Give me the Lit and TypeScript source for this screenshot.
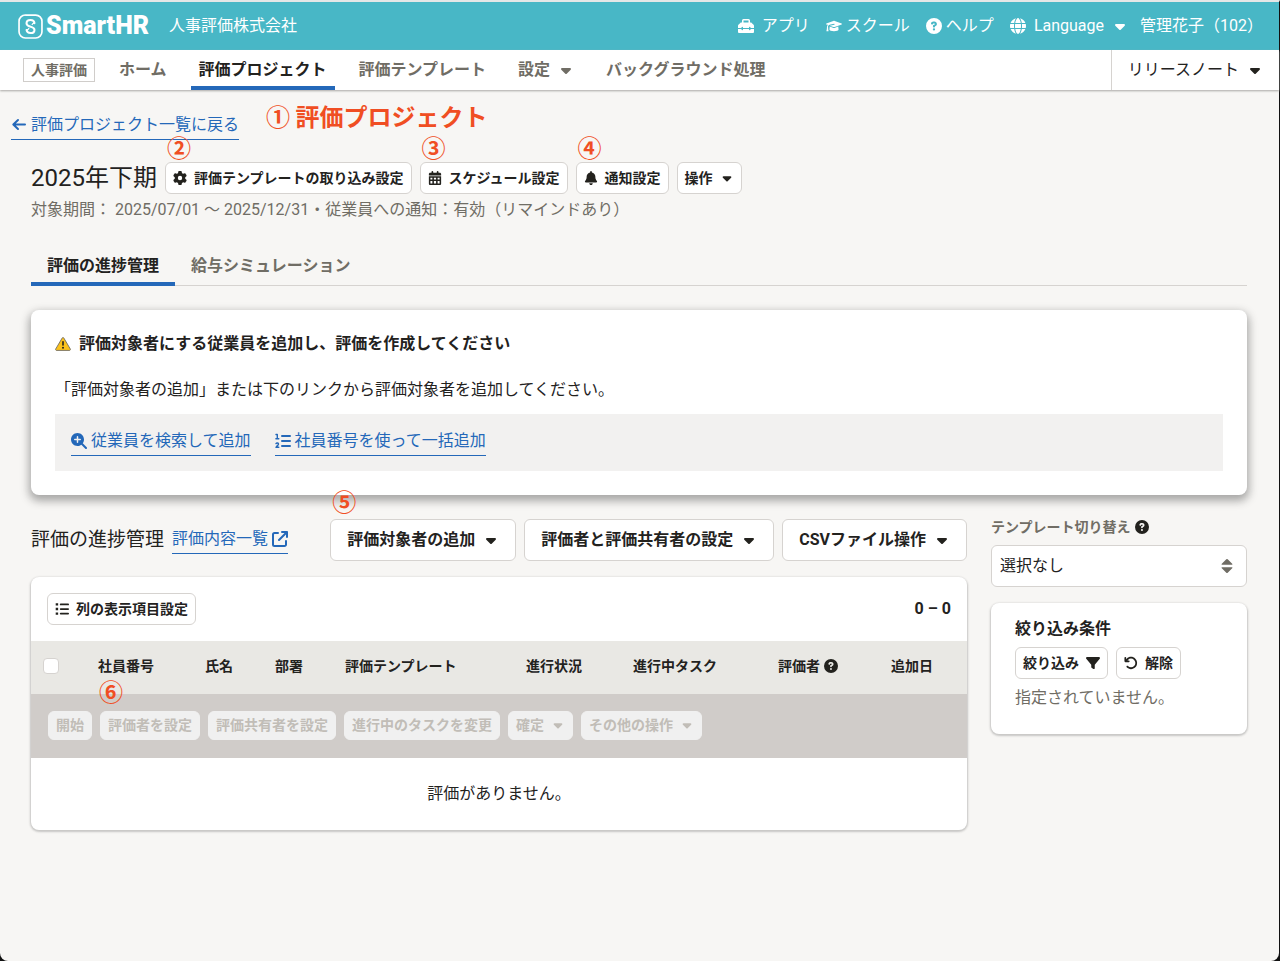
import { LitElement, html, css, svg, nothing, TemplateResult } from "lit";
import { customElement, property } from "lit/decorators.js";

type Glyph = { box: string; body: TemplateResult };

const path = (box: string, d: string): Glyph => ({
  box,
  body: svg`<path fill="currentColor" fill-rule="evenodd" d=${d} />`,
});

const GLYPHS: Record<string, Glyph> = {
  caret: path(
    "-96 0 512 512",
    "M137.400 374.600c12.500 12.500 32.800 12.500 45.300 0l128-128c9.200-9.200 11.900-22.900 6.900-34.900s-16.600-19.800-29.600-19.800L32 192c-12.900 0-24.600 7.800-29.600 19.800s-2.200 25.700 6.900 34.900l128 128z"
  ),
  sort: path(
    "0 0 16 16",
    "M3.200 6.800h9.600c.6 0 .8-.6.4-1L8.700 1.300a1 1 0 0 0-1.400 0L2.800 5.800c-.4.4-.2 1 .4 1zM3.200 9.200h9.600c.6 0 .8.6.4 1l-4.500 4.500a1 1 0 0 1-1.400 0l-4.500-4.500c-.4-.4-.2-1 .4-1z"
  ),
  gear: path(
    "0 0 512 512",
    "M495.9 166.600c3.200 8.700 .5 18.400-6.400 24.600l-43.300 39.400c1.100 8.300 1.700 16.800 1.700 25.400s-.6 17.100-1.700 25.400l43.300 39.400c6.900 6.200 9.600 15.900 6.400 24.600c-4.400 11.900-9.700 23.300-15.800 34.300l-4.700 8.100c-6.600 11-14 21.400-22.100 31.200c-5.900 7.200-15.700 9.600-24.500 6.800l-55.700-17.700c-13.400 10.300-28.200 18.900-44 25.400l-12.500 57.100c-2 9.100-9 16.300-18.200 17.800c-13.800 2.300-28 3.500-42.500 3.500s-28.700-1.200-42.500-3.500c-9.200-1.500-16.200-8.700-18.200-17.800l-12.500-57.100c-15.800-6.500-30.600-15.100-44-25.400L83.100 425.900c-8.800 2.800-18.600 .3-24.500-6.800c-8.100-9.800-15.500-20.200-22.100-31.200l-4.700-8.100c-6.100-11-11.400-22.400-15.800-34.300c-3.200-8.700-.5-18.400 6.400-24.600l43.300-39.400C64.600 273.100 64 264.600 64 256s.6-17.100 1.700-25.400L22.400 191.200c-6.900-6.200-9.600-15.900-6.400-24.600c4.400-11.900 9.700-23.300 15.800-34.300l4.700-8.100c6.600-11 14-21.400 22.100-31.200c5.900-7.200 15.700-9.600 24.500-6.800l55.700 17.700c13.400-10.300 28.200-18.900 44-25.400l12.500-57.100c2-9.100 9-16.300 18.200-17.800C227.300 1.200 241.500 0 256 0s28.700 1.200 42.500 3.500c9.200 1.500 16.200 8.700 18.200 17.800l12.500 57.100c15.800 6.500 30.600 15.100 44 25.400l55.700-17.700c8.800-2.800 18.600-.3 24.500 6.800c8.100 9.800 15.500 20.200 22.100 31.200l4.700 8.100c6.100 11 11.400 22.400 15.800 34.300zM256 336a80 80 0 1 0 0-160 80 80 0 1 0 0 160z"
  ),
  bell: path(
    "-32 0 512 512",
    "M224 0c-17.700 0-32 14.300-32 32V51.200C119 66 64 130.600 64 208v18.800c0 47-17.300 92.400-48.500 127.600l-7.400 8.300c-8.400 9.400-10.400 22.900-5.300 34.400S19.400 416 32 416H416c12.600 0 24-7.400 29.200-18.900s3.100-25-5.300-34.400l-7.400-8.300C401.300 319.200 384 273.900 384 226.800V208c0-77.400-55-142-128-156.800V32c0-17.700-14.300-32-32-32zm45.300 493.300c12-12 18.700-28.300 18.700-45.300H160c0 17 6.700 33.300 18.700 45.300s28.300 18.700 45.300 18.700s33.300-6.700 45.300-18.700z"
  ),
  calendar: path(
    "-32 0 512 512",
    "M128 0c17.700 0 32 14.300 32 32v32h128V32c0-17.700 14.300-32 32-32s32 14.300 32 32v32h48c26.500 0 48 21.500 48 48v48H0v-48c0-26.500 21.500-48 48-48h48V32c0-17.700 14.300-32 32-32zM0 192h448v272c0 26.500-21.500 48-48 48H48c-26.500 0-48-21.500-48-48zM56 248v60h72v-60zM184 248v60h80v-60zM320 248v60h72v-60zM56 364v92h72v-92zM184 364v92h80v-92zM320 364v92h72v-92z"
  ),
  help: path(
    "0 0 512 512",
    "M256 512A256 256 0 1 0 256 0a256 256 0 1 0 0 512zM160 170c10-34 38-58 78-58h30c44 0 80 34 80 78c0 30-16 54-42 68l-18 10c0 20-14 34-33 34c-20 0-33-14-33-34v-14c0-12 6-22 17-28l38-22c5-3 8-8 8-14c0-9-7-15-16-15h-30c-9 0-14 5-17 14c-6 17-22 26-40 19c-17-6-26-22-22-38zM218 364a37 37 0 1 1 74 0 37 37 0 1 1-74 0z"
  ),
  globe: path(
    "0 0 512 512",
    "M352 256c0 22.200-1.200 43.600-3.300 64H163.300c-2.200-20.400-3.300-41.800-3.300-64s1.200-43.600 3.300-64H348.700c2.200 20.400 3.300 41.800 3.300 64zm28.800-64H503.900c5.300 20.500 8.100 41.900 8.100 64s-2.800 43.500-8.100 64H380.800c2.100-20.600 3.200-42 3.200-64s-1.100-43.400-3.200-64zm112.600-32H376.700c-10-63.900-29.800-117.400-55.300-151.600c78.300 20.700 142 77.500 171.900 151.600zm-149.100 0H167.700c6.100-36.400 15.500-68.600 27-94.700c10.500-23.600 22.200-40.700 33.500-51.500C239.400 3.200 248.700 0 256 0s16.600 3.200 27.800 13.800c11.300 10.800 23 27.900 33.500 51.500c11.600 26 20.900 58.200 27 94.700zm-209 0H18.600C48.600 85.900 112.200 29.100 190.600 8.400C165.100 42.600 145.300 96.100 135.300 160zM8.100 192H131.200c-2.100 20.600-3.200 42-3.200 64s1.100 43.400 3.200 64H8.100C2.800 299.500 0 278.100 0 256s2.800-43.500 8.100-64zM194.700 446.600c-11.600-26-20.900-58.200-27-94.600H344.300c-6.100 36.400-15.500 68.600-27 94.600c-10.500 23.600-22.200 40.700-33.500 51.500C272.600 508.800 263.300 512 256 512s-16.600-3.200-27.800-13.800c-11.300-10.800-23-27.900-33.500-51.500zM135.300 352c10 63.900 29.800 117.400 55.300 151.600C112.200 482.900 48.600 426.100 18.600 352H135.300zm358.100 0c-30 74.100-93.600 130.900-171.900 151.600c25.500-34.200 45.200-87.700 55.300-151.600H493.400z"
  ),
  searchPlus: path(
    "0 0 512 512",
    "M416 208c0 45.900-14.900 88.300-40 122.700L502.600 457.400c12.500 12.500 12.500 32.800 0 45.300s-32.800 12.500-45.300 0L330.700 376c-34.400 25.200-76.800 40-122.700 40C93.100 416 0 322.900 0 208S93.100 0 208 0S416 93.100 416 208zM184 296c0 13.300 10.700 24 24 24s24-10.700 24-24V232h64c13.300 0 24-10.700 24-24s-10.700-24-24-24H232V120c0-13.300-10.700-24-24-24s-24 10.700-24 24v64H120c-13.300 0-24 10.700-24 24s10.700 24 24 24h64v64z"
  ),
  filter: path(
    "0 0 512 512",
    "M3.900 54.900C10.500 40.900 24.500 32 40 32H472c15.500 0 29.500 8.900 36.100 22.900s4.600 30.500-5.200 42.500L320 320.900V448c0 12.100-6.800 23.200-17.700 28.600s-23.800 4.300-33.500-3l-64-48c-8.100-6-12.800-15.500-12.800-25.600V320.900L9 97.300C-.7 85.400-2.800 68.800 3.900 54.900z"
  ),
  reset: path(
    "0 0 512 512",
    "M125.700 160H176c17.700 0 32 14.300 32 32s-14.300 32-32 32H48c-17.700 0-32-14.300-32-32V64c0-17.700 14.300-32 32-32s32 14.300 32 32v51.200L97.600 97.600c87.500-87.500 229.300-87.500 316.800 0s87.500 229.300 0 316.800s-229.300 87.500-316.800 0c-12.500-12.500-12.500-32.800 0-45.300s32.800-12.500 45.300 0c62.500 62.500 163.800 62.500 226.300 0s62.500-163.800 0-226.300s-163.800-62.500-226.300 0L125.700 160z"
  ),
  toolbox: path(
    "0 0 16 16",
    "M5.500 1h5A1.500 1.500 0 0 1 12 2.500V4.500h.7c.4 0 .8.200 1 .4l1.900 1.900c.2.200.4.600.4 1V10h-3.500v-.5a.5.500 0 0 0-1.500 0v.5H5v-.5a.5.500 0 0 0-1.500 0v.5H0V7.800c0-.4.100-.8.400-1l1.900-1.900c.2-.2.600-.4 1-.4H4V2.500A1.500 1.500 0 0 1 5.500 1zM5.500 2.500v2h5v-2zM0 11h3.500v.5a.5.500 0 0 0 1.500 0V11h6v.5a.5.500 0 0 0 1.500 0V11H16v3a1 1 0 0 1-1 1H1a1 1 0 0 1-1-1z"
  ),
  school: {
    box: "0 0 20 16",
    body: svg`<path fill="currentColor" d="M10 1.500c.3 0 .6.1.9.2l8.600 3.100c.6.200.6 1 0 1.200l-8.600 3.100c-.6.200-1.200.2-1.800 0L4.800 7.600l5.500-1.200c.8-.2.600-1.300-.2-1.100L4.500 6.500c-1 .3-1.700 1-2 2v1.300c.5.300.5 1 .1 1.300l.6 3c0 .3-.1.500-.4.500H.9c-.3 0-.4-.2-.4-.5l.7-3c-.4-.3-.4-1 .1-1.300V8.600c.2-1 .6-1.700 1.200-2.200L.5 6c-.6-.2-.6-1 0-1.200l8.600-3.100c.3-.1.600-.2.900-.2z"/><path fill="currentColor" d="M4.700 8.700l4 1.500c.9.300 1.700.3 2.600 0l4-1.500.4 3.700c0 1.200-2.500 2.100-5.700 2.100s-5.700-.9-5.700-2.100z"/>`,
  },
  back: {
    box: "0 0 16 16",
    body: svg`<path fill="none" stroke="currentColor" stroke-width="2" stroke-linecap="round" stroke-linejoin="round" d="M14 7.500H2.500M7 3L2.300 7.500l4.700 4.500"/>`,
  },
  list: {
    box: "0 0 16 16",
    body: svg`<path fill="none" stroke="currentColor" stroke-width="2" stroke-linecap="round" d="M6.500 2.800h8.500M6.500 8h8.500M6.500 13.200h8.500"/><path fill="currentColor" d="M.8 1.300h2.800v2.800H.8zM.8 6.600h2.800v2.800H.8zM.8 11.900h2.800v2.800H.8z"/>`,
  },
  listNumbers: {
    box: "0 0 16 16",
    body: svg`<path fill="none" stroke="currentColor" stroke-width="2" stroke-linecap="round" d="M7 3h8M7 8h8M7 13h8"/><path fill="none" stroke="currentColor" stroke-width="1.400" stroke-linecap="round" stroke-linejoin="round" d="M1 1.500h1.300v4.300M.9 5.800h2.900M1 10.600c.6-1 2.500-.8 2.500.5 0 1-1.500 1.600-2.500 3.200h2.800"/>`,
  },
  external: {
    box: "0 0 16 16",
    body: svg`<path fill="none" stroke="currentColor" stroke-width="2" stroke-linecap="round" stroke-linejoin="round" d="M6 2H2.500A1.500 1.500 0 0 0 1 3.500v10A1.500 1.500 0 0 0 2.500 15h10a1.500 1.500 0 0 0 1.500-1.500V10M10 1h5v5M15 1L7 9"/>`,
  },
  warning: {
    box: "0 0 16 16",
    body: svg`<path fill="#fcc21b" stroke="#706d65" stroke-width=".9" stroke-linejoin="round" d="M8 1.500a.9.900 0 0 1 .8.500l6.500 11a.9.900 0 0 1-.8 1.400h-13a.9.900 0 0 1-.8-1.400L7.200 2A.9.900 0 0 1 8 1.500z"/><path fill="none" stroke="#23221e" stroke-width="1.600" stroke-linecap="round" d="M8 5.800v3.200"/><circle cx="8" cy="11.700" r="1" fill="#23221e"/>`,
  },
  logo: {
    box: "0 0 24 24",
    body: svg`<rect x="1" y="1" width="22" height="22" rx="6" fill="none" stroke="currentColor" stroke-width="1.600"/><path fill="none" stroke="currentColor" stroke-width="2" stroke-linecap="round" stroke-linejoin="round" d="M15.800 8.800C15.600 7 14 5.700 12 5.700c-2.200 0-3.800 1.300-3.800 3.100 0 1.600 1 2.300 2.600 2.900l2.400.9c1.600.6 2.600 1.200 2.600 2.700 0 1.800-1.600 3-3.800 3-2 0-3.500-1.200-3.800-3"/><path fill="none" stroke="currentColor" stroke-width="1.200" stroke-linecap="round" d="M8.400 15.200c1.300 0 1.700-.6 2-1.300M15.600 8.800c-1.300 0-1.700.6-2 1.300"/>`,
  },
};

@customElement("ui-icon")
class UiIcon extends LitElement {
  @property() name = "caret";

  static styles = css`
    :host {
      display: inline-flex;
      flex: none;
      width: 16px;
      height: 16px;
    }
    svg {
      display: block;
      width: 100%;
      height: 100%;
    }
  `;

  render() {
    const glyph = GLYPHS[this.name];
    return html`<svg viewBox=${glyph.box} aria-hidden="true">${glyph.body}</svg>`;
  }
}

const BULK_ACTIONS = [
  { label: "開始" },
  { label: "評価者を設定" },
  { label: "評価共有者を設定" },
  { label: "進行中のタスクを変更" },
  { label: "確定", menu: true },
  { label: "その他の操作", menu: true },
];

const COLUMNS = [
  { label: "社員番号", cls: "c-num" },
  { label: "氏名", cls: "c-name" },
  { label: "部署", cls: "c-dept" },
  { label: "評価テンプレート", cls: "c-template" },
  { label: "進行状況", cls: "c-status" },
  { label: "進行中タスク", cls: "c-task" },
  { label: "評価者", cls: "c-reviewer", help: true },
  { label: "追加日", cls: "c-added" },
];

@customElement("app-root")
class AppRoot extends LitElement {
  static styles = css`
    :host {
      display: flex;
      box-sizing: border-box;
      min-height: 100vh;
      border-top: 2px solid #e4e7e7;
      border-right: 1px solid #111;
      background: #111;
      color: #23221e;
      font-family: "Roboto", "Noto Sans CJK JP", sans-serif;
      font-size: 16px;
      line-height: 24px;
    }
    * {
      box-sizing: border-box;
    }
    h1,
    h2,
    p {
      margin: 0;
      font-weight: 400;
    }
    a {
      color: inherit;
      text-decoration: none;
    }
    button,
    select {
      margin: 0;
      font: inherit;
      color: inherit;
    }

    .window {
      flex: 1;
      min-width: 0;
      border-radius: 0 0 8px 8px;
      background: #f7f6f4;
    }
    .topbar {
      display: flex;
      align-items: center;
      height: 48px;
      padding: 0 16px 0 18px;
      background: #48b7c6;
      color: #fff;
    }
    .brand {
      display: flex;
      align-items: center;
      gap: 3px;
      font-size: 25px;
      font-weight: 900;
    }
    .brand ui-icon {
      width: 25px;
      height: 25px;
    }
    .company {
      margin-left: 20px;
    }
    .tools {
      display: flex;
      align-items: center;
      gap: 16px;
      margin-left: auto;
    }
    .tool,
    .plain {
      display: flex;
      align-items: center;
      gap: 8px;
      padding: 0;
      border: 0;
      background: none;
    }
    .tool.tight {
      gap: 4px;
    }
    .who {
      margin-left: -4px;
    }

    .nav {
      position: relative;
      display: flex;
      align-items: stretch;
      gap: 16px;
      height: 40px;
      padding-left: 23px;
      background: #fff;
      box-shadow: 0 1px 2px #a9a7a4;
      color: #706d65;
      font-weight: 700;
    }
    .badge {
      align-self: center;
      height: 24px;
      padding: 0 7px;
      border: 1px solid #d0cdca;
      font-size: 14px;
      line-height: 22px;
    }
    .nav-item {
      display: flex;
      align-items: center;
      gap: 8px;
      padding: 0 8px;
      border: 0;
      background: none;
    }
    .nav-item.active {
      color: #23221e;
      box-shadow: inset 0 -4px #2468b9;
    }
    .release {
      margin-left: auto;
      padding: 0 16px;
      border: 0;
      border-left: 1px solid #d6d3d0;
      color: #23221e;
      font-weight: 400;
    }

    .page {
      padding: 24px 32px 32px 31px;
    }
    .crumbs {
      position: relative;
      display: flex;
      margin-left: -20px;
    }
    .link {
      display: inline-flex;
      align-items: center;
      gap: 4px;
      height: 26px;
      margin-bottom: -1px;
      padding-bottom: 3px;
      border-bottom: 1px solid #2468b9;
      color: #2468b9;
      line-height: 22px;
    }
    .head {
      display: flex;
      align-items: center;
      gap: 8px;
      margin-top: 23px;
    }
    .title {
      font-size: 24px;
      line-height: 32px;
    }
    .anchor {
      position: relative;
      display: flex;
    }
    .mark {
      position: absolute;
      z-index: 1;
      color: #f04e23;
      font-family: "Noto Sans CJK JP", sans-serif;
      font-size: 24px;
      font-weight: 700;
      line-height: 24px;
      white-space: nowrap;
      pointer-events: none;
    }
    .mark.heading {
      left: 255px;
      top: -10px;
    }
    .mark.above {
      left: 2px;
      top: -27px;
    }
    .mark.top {
      left: 2px;
      top: -30px;
    }
    .mark.below {
      left: 17px;
      top: 38px;
    }

    .btn {
      display: inline-flex;
      align-items: center;
      justify-content: center;
      gap: 7px;
      height: 32px;
      padding: 0 7px;
      border: 1px solid #d6d3d0;
      border-radius: 6px;
      background: #fff;
      font-size: 14px;
      font-weight: 700;
      line-height: 16px;
      white-space: nowrap;
    }
    .btn ui-icon {
      width: 14px;
      height: 14px;
    }
    .btn.large {
      gap: 8px;
      height: 42px;
      padding: 0 16px;
      font-size: 16px;
    }
    .btn.large ui-icon {
      width: 16px;
      height: 16px;
    }
    .btn:disabled {
      height: 29px;
      border-color: #f0f0f0;
      background: #f0f0f0;
      color: #c1bdb7;
    }

    .meta {
      margin-top: 4px;
      color: #706d65;
    }
    .tabs {
      display: flex;
      margin-top: 24px;
      box-shadow: inset 0 -1px #d6d3d0;
    }
    .tab {
      height: 40px;
      padding: 0 16px;
      border: 0;
      background: none;
      color: #706d65;
      font-weight: 700;
    }
    .tab.active {
      color: #23221e;
      box-shadow: inset 0 -4px #2468b9;
    }

    .notice {
      margin-top: 24px;
      padding: 24px;
      border-radius: 8px;
      background: #fff;
      box-shadow: 0 4px 8px 2px rgba(51, 51, 51, 0.4);
    }
    .notice-title {
      display: flex;
      align-items: center;
      gap: 8px;
      font-size: 16px;
      font-weight: 700;
      line-height: 20px;
    }
    .notice-text {
      margin-top: 24px;
    }
    .notice-links {
      display: flex;
      gap: 24px;
      margin-top: 12px;
      padding: 16px;
      background: #f2f1f0;
    }

    .columns {
      display: grid;
      grid-template-columns: minmax(0, 1fr) 256px;
      gap: 24px;
      align-items: start;
      margin-top: 24px;
    }
    .section-head {
      display: flex;
      align-items: center;
      gap: 8px;
    }
    .section-title {
      font-size: 19px;
    }
    .section-actions {
      display: flex;
      gap: 8px;
      margin-left: auto;
    }
    .card {
      border-radius: 8px;
      background: #fff;
      box-shadow: 0 1px 2px 1px rgba(51, 51, 51, 0.24);
    }
    .list {
      margin-top: 16px;
      overflow: hidden;
    }
    .list-head {
      display: flex;
      align-items: center;
      justify-content: space-between;
      padding: 16px;
      font-weight: 700;
    }
    .grid {
      width: 100%;
      border-collapse: collapse;
      table-layout: fixed;
    }
    .grid th {
      height: 53px;
      padding: 0 0 3px 16px;
      background: #e9e8e4;
      font-size: 14px;
      font-weight: 700;
      line-height: 20px;
      text-align: left;
      white-space: nowrap;
    }
    .grid .c-check {
      width: 51px;
      padding-left: 12px;
    }
    .grid .c-num {
      position: relative;
      width: 107px;
    }
    .c-name,
    .c-dept {
      width: 70px;
    }
    .c-status {
      width: 107px;
    }
    .c-task {
      width: 145px;
    }
    .c-reviewer {
      width: 113px;
    }
    .c-added {
      width: 92px;
    }
    .with-help {
      display: flex;
      align-items: center;
      gap: 4px;
    }
    .with-help ui-icon {
      width: 14px;
      height: 14px;
    }
    .check {
      display: block;
      width: 16px;
      height: 16px;
      margin: 0;
      appearance: none;
      border: 1px solid #d6d3d0;
      border-radius: 4px;
      background: #fff;
    }
    .bulk {
      height: 64px;
      padding: 0 17px 2px;
      background: #d0ccc9;
    }
    .bulk-row {
      display: flex;
      gap: 8px;
    }
    .empty {
      height: 72px;
      padding: 0;
      text-align: center;
    }

    .field-label {
      display: flex;
      align-items: center;
      gap: 4px;
      color: #706d65;
      font-size: 14px;
      font-weight: 700;
      line-height: 16px;
    }
    .field-label ui-icon {
      width: 14px;
      height: 14px;
      color: #23221e;
    }
    .select-wrap {
      position: relative;
      margin-top: 10px;
    }
    .select {
      display: block;
      width: 100%;
      height: 42px;
      padding: 0 32px 0 8px;
      appearance: none;
      border: 1px solid #d6d3d0;
      border-radius: 6px;
      background: #fff;
    }
    .select-wrap ui-icon {
      position: absolute;
      right: 12px;
      top: 13px;
      color: #706d65;
      pointer-events: none;
    }
    .filter {
      margin-top: 16px;
      padding: 16px 24px 24px;
    }
    .filter-title {
      font-size: 16px;
      font-weight: 700;
      line-height: 20px;
    }
    .filter-actions {
      display: flex;
      gap: 8px;
      margin: 8px 0 7px;
    }
    .filter-note {
      color: #706d65;
    }
  `;

  private mark(text: string, place = "above") {
    return html`<span class="mark ${place}">${text}</span>`;
  }

  private renderTop() {
    return html`
      <header class="topbar">
        <a class="brand" href="#"><ui-icon name="logo"></ui-icon>SmartHR</a>
        <span class="company">人事評価株式会社</span>
        <div class="tools">
          <a class="tool" href="#"><ui-icon name="toolbox"></ui-icon>アプリ</a>
          <a class="tool tight" href="#"><ui-icon name="school"></ui-icon>スクール</a>
          <a class="tool tight" href="#"><ui-icon name="help"></ui-icon>ヘルプ</a>
          <button class="tool" type="button">
            <ui-icon name="globe"></ui-icon>Language<ui-icon name="caret"></ui-icon>
          </button>
          <button class="plain who" type="button">管理花子（102）</button>
        </div>
      </header>
      <nav class="nav">
        <span class="badge">人事評価</span>
        <a class="nav-item" href="#">ホーム</a>
        <a class="nav-item active" href="#" aria-current="page">評価プロジェクト</a>
        <a class="nav-item" href="#">評価テンプレート</a>
        <button class="nav-item" type="button">設定<ui-icon name="caret"></ui-icon></button>
        <a class="nav-item" href="#">バックグラウンド処理</a>
        <button class="nav-item release" type="button">
          リリースノート<ui-icon name="caret"></ui-icon>
        </button>
      </nav>
    `;
  }

  private renderHead() {
    return html`
      <div class="crumbs">
        <a class="link" href="#"><ui-icon name="back"></ui-icon>評価プロジェクト一覧に戻る</a>
        ${this.mark("① 評価プロジェクト", "heading")}
      </div>
      <div class="head">
        <h1 class="title">2025年下期</h1>
        <div class="anchor">
          ${this.mark("②")}
          <button class="btn" type="button">
            <ui-icon name="gear"></ui-icon>評価テンプレートの取り込み設定
          </button>
        </div>
        <div class="anchor">
          ${this.mark("③")}
          <button class="btn" type="button">
            <ui-icon name="calendar"></ui-icon>スケジュール設定
          </button>
        </div>
        <div class="anchor">
          ${this.mark("④")}
          <button class="btn" type="button"><ui-icon name="bell"></ui-icon>通知設定</button>
        </div>
        <button class="btn" type="button">操作<ui-icon name="caret"></ui-icon></button>
      </div>
      <p class="meta">対象期間： 2025/07/01 〜 2025/12/31・従業員への通知：有効（リマインドあり）</p>
      <div class="tabs" role="tablist">
        <button class="tab active" type="button" role="tab" aria-selected="true">
          評価の進捗管理
        </button>
        <button class="tab" type="button" role="tab" aria-selected="false">
          給与シミュレーション
        </button>
      </div>
    `;
  }

  private renderNotice() {
    return html`
      <section class="notice">
        <h2 class="notice-title">
          <ui-icon name="warning"></ui-icon>評価対象者にする従業員を追加し、評価を作成してください
        </h2>
        <p class="notice-text">
          「評価対象者の追加」または下のリンクから評価対象者を追加してください。
        </p>
        <div class="notice-links">
          <a class="link" href="#"><ui-icon name="searchPlus"></ui-icon>従業員を検索して追加</a>
          <a class="link" href="#"><ui-icon name="listNumbers"></ui-icon>社員番号を使って一括追加</a>
        </div>
      </section>
    `;
  }

  private renderTable() {
    return html`
      <table class="grid">
        <thead>
          <tr>
            <th class="c-check">
              <input class="check" type="checkbox" aria-label="すべて選択" />
            </th>
            ${COLUMNS.map(
              (c, i) => html`<th class=${c.cls} scope="col">
                ${i === 0 ? this.mark("⑥", "below") : nothing}
                ${c.help
                  ? html`<span class="with-help">${c.label}<ui-icon name="help"></ui-icon></span>`
                  : c.label}
              </th>`
            )}
          </tr>
        </thead>
        <tbody>
          <tr>
            <td class="bulk" colspan="9">
              <div class="bulk-row">
                ${BULK_ACTIONS.map(
                  (a) => html`<button class="btn" type="button" disabled>
                    ${a.label}${a.menu ? html`<ui-icon name="caret"></ui-icon>` : nothing}
                  </button>`
                )}
              </div>
            </td>
          </tr>
          <tr>
            <td class="empty" colspan="9">評価がありません。</td>
          </tr>
        </tbody>
      </table>
    `;
  }

  private renderColumns() {
    return html`
      <div class="columns">
        <section>
          <div class="section-head">
            <h2 class="section-title">評価の進捗管理</h2>
            <a class="link" href="#">評価内容一覧<ui-icon name="external"></ui-icon></a>
            <div class="section-actions">
              <div class="anchor">
                ${this.mark("⑤", "top")}
                <button class="btn large" type="button">
                  評価対象者の追加<ui-icon name="caret"></ui-icon>
                </button>
              </div>
              <button class="btn large" type="button">
                評価者と評価共有者の設定<ui-icon name="caret"></ui-icon>
              </button>
              <button class="btn large" type="button">
                CSVファイル操作<ui-icon name="caret"></ui-icon>
              </button>
            </div>
          </div>
          <div class="card list">
            <div class="list-head">
              <button class="btn" type="button"><ui-icon name="list"></ui-icon>列の表示項目設定</button>
              <span>0 – 0</span>
            </div>
            ${this.renderTable()}
          </div>
        </section>
        <aside>
          <label class="field-label" for="template">
            テンプレート切り替え<ui-icon name="help"></ui-icon>
          </label>
          <div class="select-wrap">
            <select class="select" id="template">
              <option>選択なし</option>
            </select>
            <ui-icon name="sort"></ui-icon>
          </div>
          <section class="card filter">
            <h2 class="filter-title">絞り込み条件</h2>
            <div class="filter-actions">
              <button class="btn" type="button">絞り込み<ui-icon name="filter"></ui-icon></button>
              <button class="btn" type="button"><ui-icon name="reset"></ui-icon>解除</button>
            </div>
            <p class="filter-note">指定されていません。</p>
          </section>
        </aside>
      </div>
    `;
  }

  render() {
    return html`
      <div class="window">
        ${this.renderTop()}
        <main class="page">
          ${this.renderHead()} ${this.renderNotice()} ${this.renderColumns()}
        </main>
      </div>
    `;
  }
}
